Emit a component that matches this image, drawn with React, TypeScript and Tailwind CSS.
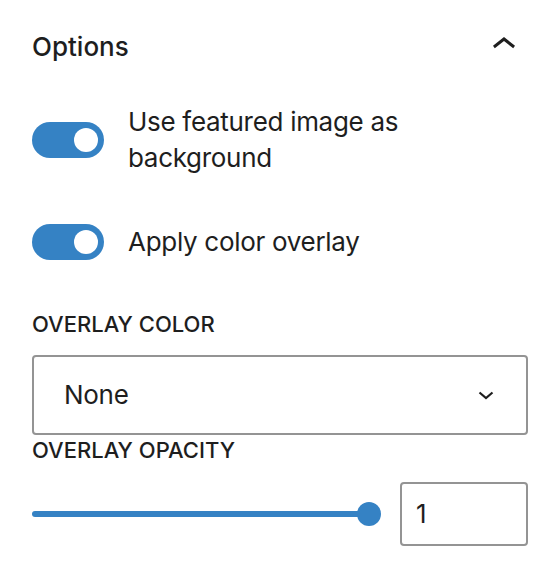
import React from "react";

function Toggle() {
  return (
    <div className="relative w-[72px] h-[36px] shrink-0 rounded-full bg-[#3582c4]">
      <div className="absolute right-[6px] top-[6px] w-[24px] h-[24px] rounded-full bg-white" />
    </div>
  );
}

export default function App() {
  return (
    <div className="w-[556px] h-[588px] bg-white pl-[32px] pr-[28px] font-['Inter',sans-serif] text-[#1e1e1e]">
      <div className="flex items-center justify-between h-[94px]">
        <span className="text-[26px] font-medium leading-[36px]">Options</span>
        <svg width="48" height="48" viewBox="0 0 24 24" className="mt-[-5px]">
          <path d="M6.5 12.4L12 8l5.5 4.4-.9 1.2L12 10l-4.6 3.6-.9-1.2z" fill="#1e1e1e" />
        </svg>
      </div>

      <div className="mt-[10px] flex items-center">
        <Toggle />
        <span className="ml-[24px] text-[26px] leading-[36px] tracking-[-0.3px]">
          Use featured image as background
        </span>
      </div>

      <div className="mt-[48px] flex items-center">
        <Toggle />
        <span className="ml-[24px] text-[26px] leading-[36px] tracking-[-0.3px]">Apply color overlay</span>
      </div>

      <div className="mt-[49px] text-[22px] font-medium leading-[30px] uppercase">
        Overlay Color
      </div>

      <div className="mt-[16px] h-[80px] flex items-center justify-between border-2 border-[#949494] rounded-[4px] pl-[30px] pr-[32px]">
        <span className="text-[26px] leading-[36px] tracking-[-0.3px]">None</span>
        <svg width="16" height="9" viewBox="0 0 16 9" fill="none">
          <path d="M1.5 1.5L8 7L14.5 1.5" stroke="#1e1e1e" strokeWidth="2.2" />
        </svg>
      </div>

      <div className="text-[22px] font-medium leading-[30px] uppercase">Overlay Opacity</div>

      <div className="mt-[17px] flex items-center">
        <div className="relative flex-1 h-[24px]">
          <div className="absolute left-0 right-[12px] top-[9px] h-[6px] rounded-full bg-[#3582c4]" />
          <div className="absolute right-0 top-0 w-[24px] h-[24px] rounded-full bg-[#3582c4]" />
        </div>
        <div className="ml-[19px] w-[128px] h-[64px] flex items-center border-2 border-[#949494] rounded-[4px] pl-[14px]">
          <span className="text-[26px] leading-[36px]">1</span>
        </div>
      </div>
    </div>
  );
}
